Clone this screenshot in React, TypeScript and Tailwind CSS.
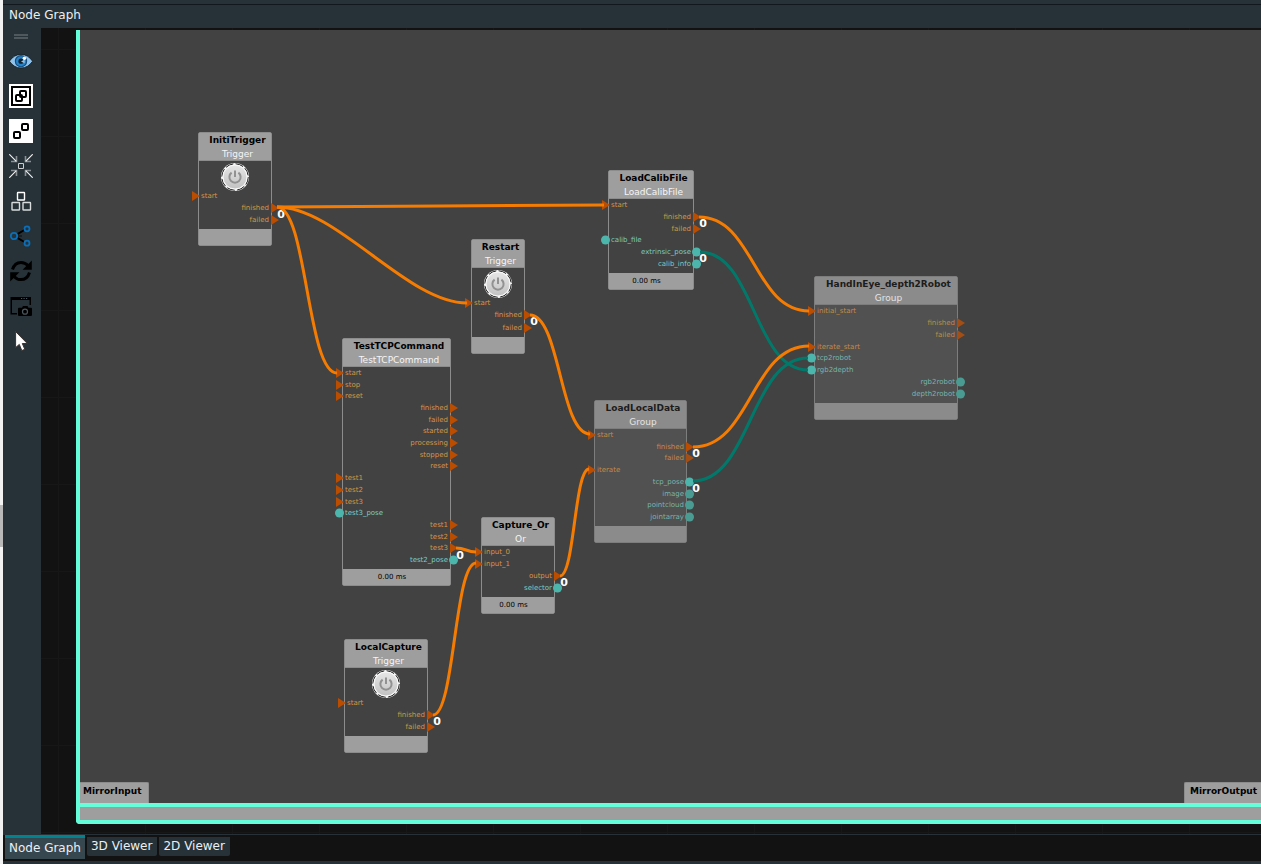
import React from 'react';
import clsx from 'clsx';

type Port = { name: string; kind: 'flow' | 'data'; side: 'in' | 'out'; count?: string; wired?: boolean };

type GraphNode = {
  title: string;
  type: string;
  x: number;
  y: number;
  width: number;
  bodyHeight: number;
  rows: Port[];
  trigger?: boolean;
  group?: boolean;
  time?: string;
};

const flowIn = (name: string, wired = false): Port => ({ name, kind: 'flow', side: 'in', wired });
const flowOut = (name: string, count?: string): Port => ({ name, kind: 'flow', side: 'out', count });
const dataIn = (name: string, wired = false): Port => ({ name, kind: 'data', side: 'in', wired });
const dataOut = (name: string, count?: string): Port => ({ name, kind: 'data', side: 'out', count });

const NODES: GraphNode[] = [
  {
    title: 'InitiTrigger', type: 'Trigger', x: 118, y: 102, width: 74, bodyHeight: 68, trigger: true,
    rows: [flowIn('start'), flowOut('finished', '0'), flowOut('failed')],
  },
  {
    title: 'Restart', type: 'Trigger', x: 391, y: 209, width: 54, bodyHeight: 69, trigger: true,
    rows: [flowIn('start'), flowOut('finished', '0'), flowOut('failed')],
  },
  {
    title: 'LocalCapture', type: 'Trigger', x: 264, y: 609, width: 84, bodyHeight: 68, trigger: true,
    rows: [flowIn('start'), flowOut('finished', '0'), flowOut('failed')],
  },
  {
    title: 'TestTCPCommand', type: 'TestTCPCommand', x: 262, y: 308, width: 109, bodyHeight: 202, time: '0.00 ms',
    rows: [
      flowIn('start'), flowIn('stop'), flowIn('reset'),
      flowOut('finished'), flowOut('failed'), flowOut('started'), flowOut('processing'), flowOut('stopped'), flowOut('reset'),
      flowIn('test1'), flowIn('test2'), flowIn('test3'), dataIn('test3_pose'),
      flowOut('test1'), flowOut('test2'), flowOut('test3', '0'), dataOut('test2_pose'),
    ],
  },
  {
    title: 'Capture_Or', type: 'Or', x: 401, y: 487, width: 74, bodyHeight: 51, time: '0.00 ms',
    rows: [flowIn('input_0'), flowIn('input_1'), flowOut('output', '0'), dataOut('selector')],
  },
  {
    title: 'LoadCalibFile', type: 'LoadCalibFile', x: 528, y: 140, width: 86, bodyHeight: 74, time: '0.00 ms',
    rows: [
      flowIn('start'), flowOut('finished', '0'), flowOut('failed'),
      dataIn('calib_file'), dataOut('extrinsic_pose', '0'), dataOut('calib_info'),
    ],
  },
  {
    title: 'LoadLocalData', type: 'Group', x: 514, y: 370, width: 93, bodyHeight: 97, group: true,
    rows: [
      flowIn('start', true), flowOut('finished', '0'), flowOut('failed'), flowIn('iterate', true),
      dataOut('tcp_pose', '0'), dataOut('image'), dataOut('pointcloud'), dataOut('jointarray'),
    ],
  },
  {
    title: 'HandInEye_depth2Robot', type: 'Group', x: 734, y: 246, width: 144, bodyHeight: 98, group: true,
    rows: [
      flowIn('initial_start', true), flowOut('finished'), flowOut('failed'), flowIn('iterate_start', true),
      dataIn('tcp2robot', true), dataIn('rgb2depth', true), dataOut('rgb2robot'), dataOut('depth2robot'),
    ],
  },
];

type Wire = { from: [number, number]; to: [number, number]; data?: boolean };

const WIRES: Wire[] = [
  { from: [620, 222], to: [728, 340], data: true },
  { from: [613, 451], to: [728, 328], data: true },
  { from: [197, 177], to: [524, 175] },
  { from: [197, 177], to: [387, 273] },
  { from: [197, 177], to: [257, 343] },
  { from: [450, 285], to: [510, 404] },
  { from: [376, 518], to: [396, 522] },
  { from: [353, 685], to: [396, 533] },
  { from: [480, 546], to: [509, 439] },
  { from: [619, 187], to: [729, 281] },
  { from: [613, 417], to: [729, 316] },
];

// the handles stop growing on long wires
const wirePath = ({ from: [x1, y1], to: [x2, y2] }: Wire) => {
  const reach = Math.min((x2 - x1) / 2, 60);
  return `M${x1} ${y1} C${x1 + reach} ${y1} ${x2 - reach} ${y2} ${x2} ${y2}`;
};

const PowerButton = () => (
  <button type="button" aria-label="Trigger" className="block size-7">
    <svg viewBox="0 0 28 28" className="size-7">
      <defs>
        <linearGradient id="power-face" x1="0" y1="0" x2="0" y2="1">
          <stop offset="0" stopColor="#e6e6e6" />
          <stop offset="1" stopColor="#c2c2c2" />
        </linearGradient>
      </defs>
      <circle cx="14" cy="14" r="14" fill="#f4f4f4" />
      <circle cx="14" cy="14" r="13.2" fill="none" stroke="#1c1c1c" strokeWidth="1" strokeDasharray="8 2.4" />
      <circle cx="14" cy="14" r="12" fill="url(#power-face)" stroke="#fafafa" strokeWidth="1" />
      <path d="M10.6 9.6a5.6 5.6 0 1 0 6.8 0" fill="none" stroke="#929292" strokeWidth="2" />
      <path d="M14 7.5v6.5" stroke="#929292" strokeWidth="2" />
    </svg>
  </button>
);

const PortMark = ({ port, dim }: { port: Port; dim: boolean }) => {
  const input = port.side === 'in';
  const faded = dim && !port.wired && !port.count;
  if (port.kind === 'data') {
    return (
      <span
        className={clsx(
          'absolute top-1/2 size-[9px] -translate-y-1/2 rounded-full',
          input ? '-left-[8px]' : '-right-[8px]',
          faded ? 'bg-[#4a9c93]' : 'bg-[#4db6ac]',
        )}
      />
    );
  }
  return (
    <svg
      viewBox="0 0 8 10"
      className={clsx(
        'absolute top-1/2 h-[10px] w-[8px] -translate-y-1/2',
        input ? '-left-[7px]' : '-right-[8px]',
        faded ? 'fill-[#a34e15]' : 'fill-[#bb4d00]',
      )}
    >
      <path d="M0 0l8 5-8 5z" />
    </svg>
  );
};

const NodeBox = ({ node }: { node: GraphNode }) => {
  const dim = Boolean(node.group);
  return (
    <article
      className={clsx('absolute rounded-xs border', dim ? 'border-[#7d7d7d]' : 'border-[#8c8c8c]')}
      style={{ left: node.x, top: node.y, width: node.width }}
    >
      <header
        className={clsx(
          'flex flex-col items-center border-b pl-[5px] text-[9px] leading-[14px] whitespace-nowrap',
          dim ? 'border-[#7d7d7d] bg-[#8b8b8b]' : 'border-[#8c8c8c] bg-[#9e9e9e]',
        )}
      >
        <h2 className={clsx('font-bold', dim ? 'text-[#1c1c1c]' : 'text-black')}>{node.title}</h2>
        <p className={clsx('-mb-px', dim ? 'text-[#e4e4e4]' : 'text-[#f5f5f5]')}>{node.type}</p>
      </header>
      <div
        className={clsx('flex flex-col pb-[3px]', dim ? 'bg-[#515151]' : 'bg-[#424242]')}
        style={{ height: node.bodyHeight }}
      >
        {node.trigger && (
          <div className="flex h-[29px] shrink-0 items-start justify-center pt-[2px]">
            <PowerButton />
          </div>
        )}
        <ul className="flex flex-1 flex-col">
          {node.rows.map((port, i) => (
            <li
              key={i}
              className={clsx(
                'relative flex flex-1 items-center px-[2px] text-[7px] leading-[8px]',
                port.side === 'out' && 'justify-end',
              )}
            >
              <PortMark port={port} dim={dim} />
              <span
                className={clsx(
                  port.kind === 'flow'
                    ? dim ? 'text-[#c48a45]' : 'text-[#d69545]'
                    : dim ? 'text-[#77b5ac]' : 'text-[#7accc2]',
                )}
              >
                {port.name}
              </span>
              {port.count && (
                <b className="absolute top-[7px] -right-[14px] text-[11px] leading-[12px] text-white">{port.count}</b>
              )}
            </li>
          ))}
        </ul>
      </div>
      <footer
        className={clsx(
          'h-4 pr-[9px] text-center text-[7px] leading-[16px] text-black',
          dim ? 'bg-[#8b8b8b]' : 'bg-[#9e9e9e]',
        )}
      >
        {node.time}
      </footer>
    </article>
  );
};

const TOOLS: { label: string; icon: React.ReactNode }[] = [
  {
    label: 'Show',
    icon: (
      <>
        <path d="M.4 12.2Q5 5.400 12 5.400t11.600 6.800Q19 19 12 19T.4 12.200z" fill="#8fc3ee" stroke="#101a20" strokeWidth=".8" />
        <circle cx="12" cy="12.200" r="5.600" fill="#2384cb" stroke="#174d7c" strokeWidth="1.200" />
        <circle cx="12" cy="12.200" r="2.600" fill="#10222f" />
        <path d="M12 12.400l3.600-1.800v3.600z" fill="#8fc3ee" />
        <circle cx="15.400" cy="9.300" r="1.700" fill="#fff" />
      </>
    ),
  },
  {
    label: 'Group nodes',
    icon: (
      <>
        <path fill="#fff" d="M0 0h24v24H0z" />
        <g fill="none" stroke="#000" strokeWidth="2">
          <path d="M3 3h18v18H3z" />
          <rect x="7" y="11" width="6" height="6" rx="1" />
          <rect x="11" y="7" width="6" height="6" rx="1" />
        </g>
      </>
    ),
  },
  {
    label: 'Ungroup nodes',
    icon: (
      <>
        <path fill="#fff" d="M0 0h24v24H0z" />
        <g fill="none" stroke="#000" strokeWidth="2">
          <rect x="13" y="5" width="6" height="6" rx="1" />
          <rect x="5" y="13" width="6" height="6" rx="1" />
        </g>
      </>
    ),
  },
  {
    label: 'Fit to center',
    icon: (
      <g fill="none">
        <path d="M7.500 2v5.500H2M16.500 2v5.500H22M7.500 22v-5.500H2M16.500 22v-5.500H22" stroke="#8a9195" strokeWidth="1.600" />
        <path d="M.3.3l7 7M23.700.3l-7 7M.3 23.700l7-7M23.700 23.700l-7-7" stroke="#f0f0f0" strokeWidth="1.200" />
        <path d="M9.500 9.500h5v5h-5z" stroke="#c9cdcf" />
      </g>
    ),
  },
  {
    label: 'Arrange',
    icon: (
      <g fill="none" stroke="#d9dcdd" strokeWidth="1.400">
        <rect x="8.500" y="3.500" width="7" height="7.500" rx=".5" stroke="#fff" />
        <rect x="3" y="13.500" width="7.500" height="7.500" rx=".5" />
        <rect x="14" y="13.500" width="7.500" height="7.500" rx=".5" />
      </g>
    ),
  },
  {
    label: 'Connections',
    icon: (
      <g fill="none">
        <path d="M8 10.400l7.800-4.600M8 13.600l7.800 4.600" stroke="#000" strokeWidth="1.800" />
        <path d="M9.500 12h4" stroke="#000" strokeWidth="1.400" strokeDasharray="1 1" />
        <g stroke="#0a6fb8" strokeWidth="1.800">
          <circle cx="5" cy="12" r="3.200" />
          <circle cx="18" cy="4.800" r="2.500" />
          <circle cx="18" cy="19.200" r="2.500" />
        </g>
      </g>
    ),
  },
  {
    label: 'Refresh',
    icon: (
      <>
        <path d="M3.500 10.500C5 5.600 8.200 3.400 12 3.400c3 0 5.200 1.200 7 3.200M20.500 13.500C19 18.400 15.800 20.600 12 20.600c-3 0-5.200-1.200-7-3.200" fill="none" stroke="#000" strokeWidth="3" />
        <path d="M22.800 1.600v9.200h-9.200zM1.200 22.400v-9.200h9.200z" />
      </>
    ),
  },
  {
    label: 'Screenshot',
    icon: (
      <>
        <path d="M1.500 3H22v8h-1.500V6H3v13h5v1.500H1.500z" />
        <path d="M12 4.500h1.200M14.500 4.500h1.200M17 4.500h1.200" stroke="#4b575d" />
        <path d="M10 13.800h3l1-1.800h4.500l1 1.800H22q1 0 1 1V21q0 1-1 1H10q-1 0-1-1v-6.200q0-1 1-1z" />
        <circle cx="16" cy="17.700" r="2.500" fill="none" stroke="#4b575d" strokeWidth="1.200" />
      </>
    ),
  },
  {
    label: 'Select',
    icon: (
      <path d="M6.600 2.600v16l3.700-3.200 2.500 6.200 3-1.300-2.500-5.800h5z" fill="#fff" stroke="#3a3330" strokeWidth="1" />
    ),
  },
];

const VIEWS = ['3D Viewer', '2D Viewer'];

export default function App() {
  return (
    <div className="flex h-screen overflow-hidden bg-[#263238] font-['DejaVu_Sans',sans-serif]">
      <div className="flex w-[3px] shrink-0 flex-col bg-[#f2f2f2]">
        <div className="mt-[505px] h-[42px] bg-[#b9b9b9]" />
      </div>
      <main className="flex min-w-0 flex-1 flex-col">
        <h1 className="mt-1 h-6 shrink-0 border-t border-[#12181b] pl-[6px] text-[12px] leading-[20px] text-[#eceff1]">Node Graph</h1>
        <div className="flex min-h-0 flex-1 border-b border-[#263238]">
          <nav className="flex w-[38px] shrink-0 flex-col items-center gap-[11px] pt-[6px] pr-[2px]">
            <div className="-mb-px h-[5px] w-[14px] border-y-2 border-[#4f585c]" />
            {TOOLS.map((tool) => (
              <button key={tool.label} type="button" aria-label={tool.label} className="size-6">
                <svg viewBox="0 0 24 24" className="size-6">{tool.icon}</svg>
              </button>
            ))}
          </nav>
          <div className="flex min-w-0 flex-1 flex-col bg-[#121212] bg-[linear-gradient(#171717_1px,transparent_1px),linear-gradient(90deg,#171717_1px,transparent_1px)] bg-[size:87px_87px] bg-[position:17px_21px] pt-[2px] pb-[10px] pl-[35px]">
            <section className="flex min-h-0 flex-1 flex-col rounded-bl-sm border-b-4 border-l-4 border-[#64ffda]">
              <div className="relative flex flex-1 flex-col justify-end overflow-hidden bg-[#424242]">
                {NODES.map((node) => (
                  <NodeBox key={node.title} node={node} />
                ))}
                <svg className="pointer-events-none absolute inset-0 size-full" fill="none" strokeWidth="3">
                  {WIRES.map((wire, i) => (
                    <path key={i} d={wirePath(wire)} className={wire.data ? 'stroke-[#00796b]' : 'stroke-[#f57c00]'} />
                  ))}
                </svg>
                <div className="flex justify-between text-[9px] leading-[17px] font-bold text-black">
                  <div className="h-[21px] rounded-tr-xs border-t border-r border-[#8c8c8c] bg-[#9e9e9e] pr-[7px] pl-[3px]">MirrorInput</div>
                  <div className="h-[21px] w-[77px] rounded-tl-xs border-t border-l border-[#8c8c8c] bg-[#9e9e9e] pl-[5px]">MirrorOutput</div>
                </div>
              </div>
              <div className="h-[17px] shrink-0 border-t-4 border-[#64ffda] bg-[#9e9e9e]" />
            </section>
          </div>
        </div>
        <div className="flex h-[26px] shrink-0 items-start gap-[2px] bg-[#121212] pl-[2px] text-[12px] text-[#eceff1]">
          <button type="button" className="h-6 border-t-3 border-[#00838f] bg-[#37474f] px-1 leading-[21px]">Node Graph</button>
          {VIEWS.map((view) => (
            <button key={view} type="button" className="mt-[2px] h-[19px] rounded-b-xs bg-[#263238] pr-[5px] pl-1 leading-[19px]">
              {view}
            </button>
          ))}
        </div>
        <div className="h-[3px] shrink-0" />
      </main>
    </div>
  );
}
